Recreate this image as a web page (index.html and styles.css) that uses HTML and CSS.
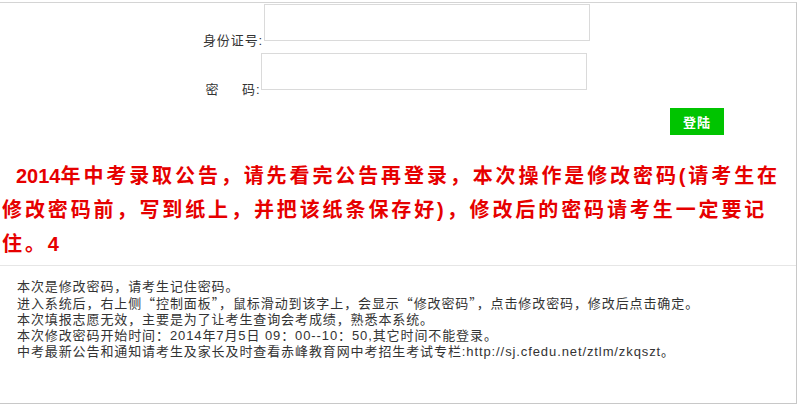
FILE: index.html
```html
<!DOCTYPE html>
<html lang="zh-CN">
<head>
<meta charset="utf-8">
<title>修改密码登陆</title>
<link rel="stylesheet" href="styles.css">
</head>
<body>
<div class="page">
  <form class="login">
    <div class="row"><label class="label">身份证号:</label><input class="field" type="text"></div>
    <div class="row"><label class="label">密&nbsp;&nbsp;&nbsp;&nbsp;&nbsp;码:</label><input class="field" type="password"></div>
    <div class="actions"><button class="btn" type="button">登陆</button></div>
  </form>
  <p class="notice"><span class="num">2014</span>年中考录取公告，请先看完公告再登录，本次操作是修改密码(请考生在修改密码前，写到纸上，并把该纸条保存好)，修改后的密码请考生一定要记住。<span class="num">4</span></p>
  <div class="info">
    <p class="line">本次是修改密码，请考生记住密码。</p>
    <p class="line">进入系统后，右上侧<span class="cjk">“</span>控制面板<span class="cjk">”</span>，鼠标滑动到该字上，会显示<span class="cjk">“</span>修改密码<span class="cjk">”</span>，点击修改密码，修改后点击确定。</p>
    <p class="line">本次填报志愿无效，主要是为了让考生查询会考成绩，熟悉本系统。</p>
    <p class="line">本次修改密码开始时间：2014年7月5日 09：00--10：50,其它时间不能登录。</p>
    <p class="line">中考最新公告和通知请考生及家长及时查看赤峰教育网中考招生考试专栏:http://sj.cfedu.net/ztlm/zkqszt。</p>
  </div>
</div>
</body>
</html>
```

FILE: styles.css
```css
html, body {
  margin: 0;
  padding: 0;
  background: #fff;
}

body {
  font-family: "Liberation Sans", "Noto Sans CJK SC", sans-serif;
  font-size: 13px;
  color: #333;
}

.page {
  box-sizing: border-box;
  width: 797px;
  height: 402px;
  margin-top: 2px;
  border-top: 1px solid #d4d4d4;
  border-right: 1px solid #c8c8c8;
  border-bottom: 1px solid #c8c8c8;
  display: flex;
  flex-direction: column;
}

.login {
  display: flex;
  flex-direction: column;
  margin: 0;
  padding: 1px 3px 0 0;
}

.row {
  display: flex;
  justify-content: center;
  align-items: flex-end;
}

.row + .row {
  margin-top: 5px;
}

.label {
  font-size: 13px;
  line-height: 14px;
  letter-spacing: 0.9px;
  color: #333;
  white-space: nowrap;
}

.field {
  display: block;
  box-sizing: border-box;
  width: 326px;
  height: 37px;
  margin: 0 0 7px 1px;
  padding: 0;
  border: 1px solid #dadada;
  background: #fff;
  outline: none;
}

.actions {
  display: flex;
  justify-content: flex-end;
  margin-top: 11px;
  padding-right: 69px;
}

.btn {
  width: 54px;
  height: 27px;
  padding: 0;
  border: 0;
  background: #00c400;
  color: #fff;
  font-family: "Noto Sans CJK SC", sans-serif;
  font-size: 13px;
  font-weight: bold;
  letter-spacing: 1px;
  cursor: pointer;
}

.notice {
  margin: 24px 0 0 0;
  padding-left: 2px;
  font-family: "Liberation Sans", "Noto Sans CJK SC", sans-serif;
  font-size: 20px;
  font-weight: bold;
  line-height: 34px;
  letter-spacing: 2.9px;
  text-indent: 14px;
  color: #e60000;
}

.num {
  letter-spacing: 0;
}

.info {
  margin-top: 4px;
  border-top: 1px solid #e6e6e6;
  padding: 13px 0 0 17px;
}

.line {
  margin: 0;
  font-size: 13px;
  line-height: 16px;
  letter-spacing: 0.9px;
  color: #333;
  white-space: nowrap;
}

.cjk {
  font-family: "Noto Sans CJK SC", sans-serif;
}
```
